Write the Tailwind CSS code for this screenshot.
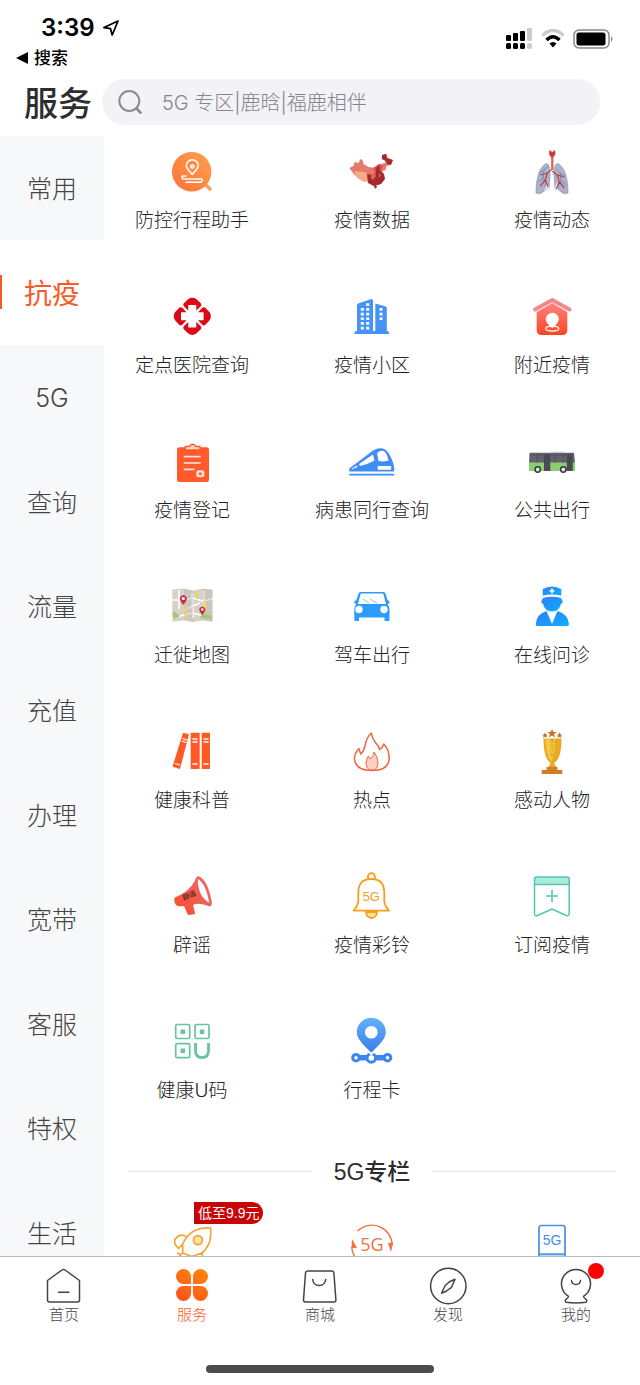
<!DOCTYPE html>
<html lang="zh-CN">
<head>
<meta charset="utf-8">
<meta name="viewport" content="width=device-width, initial-scale=1">
<title>服务</title>
<script src="https://cdn.jsdelivr.net/npm/@tailwindcss/browser@4"></script>
</head>
<body class="flex h-screen flex-col overflow-hidden bg-white font-['Inter','Noto_Sans_CJK_SC',sans-serif] text-[#333]">
<header class="shrink-0 pb-[11px]">
  <div class="flex items-start justify-between pt-4 pr-[26px] pl-4 text-black">
    <div>
      <div class="flex h-6 items-center gap-2 pl-[25px]">
        <span class="text-[24px] leading-6 font-semibold">3:39</span>
        <svg class="size-4" viewBox="0 0 16 16" fill="none" stroke="#000" stroke-width="1.8" stroke-linejoin="round"><path d="M15 1 1 7.5 7.5 8.7 9.2 15Z"/></svg>
      </div>
      <a href="#" class="flex h-[34px] items-center gap-1.5 pt-0.5 text-[17px] leading-6 font-medium"><svg class="size-3" viewBox="0 0 12 12"><path d="M0 6 12 0V12Z"/></svg>搜索</a>
    </div>
    <div class="flex items-center gap-2 pt-3">
      <svg width="27" height="21" viewBox="0 0 27 21"><g fill="#000"><rect y="7" width="5" height="6" rx="1"/><rect x="7" y="5" width="5" height="8" rx="1"/><rect x="14" y="3" width="5" height="10" rx="1"/><rect y="15" width="5" height="6" rx="1.5"/><rect x="7" y="15" width="5" height="6" rx="1.5"/><rect x="14" y="15" width="5" height="6" rx="1.5"/></g><g fill="#ccc"><rect x="21" y="0" width="5" height="13" rx="1"/><rect x="21" y="15" width="5" height="6" rx="2"/></g></svg>
      <svg width="24" height="20" viewBox="0 0 24 20" fill="none"><path d="M1.500 6.500Q12-3.500 22.500 6.500" stroke="#ccc" stroke-width="3.500"/><path d="M5.500 11Q12 4.500 18.500 11" stroke="#000" stroke-width="3.500"/><path d="M8.500 14.500Q12 11.500 15.500 14.500L12 18.500Z" fill="#000"/></svg>
      <svg width="41" height="20" viewBox="0 0 41 20"><rect x="1" y="1" width="35" height="18" rx="5" fill="#fff" stroke="#888" stroke-width="1.500"/><rect x="3.500" y="3.500" width="29" height="13" rx="2.500"/><path d="M38 7q3 3 0 6Z" fill="#888"/></svg>
    </div>
  </div>
  <div class="flex items-center gap-2.5 pt-[5px] pr-10 pl-6">
    <h1 class="shrink-0 pt-1 text-[34px] leading-[42px] font-medium text-[#2e2e2e]">服务</h1>
    <label class="flex h-[46px] flex-1 items-center gap-5 rounded-full bg-[#f2f2f7] pl-4">
      <svg class="size-6 shrink-0" viewBox="0 0 24 24" fill="none" stroke="#8b8b95" stroke-width="2"><circle cx="11.300" cy="11" r="10"/><path d="m18.500 18.500 4.800 5" stroke-width="2.600"/></svg>
      <input type="search" aria-label="搜索" placeholder="5G 专区|鹿晗|福鹿相伴" class="min-w-0 flex-1 bg-transparent pt-0.5 text-[20px] leading-6 font-light outline-none placeholder:text-[#85858e]">
    </label>
  </div>
</header>

<div class="flex min-h-0 flex-1">
  <nav aria-label="分类" class="w-[104px] shrink-0 overflow-y-auto bg-[#f7f8fa] [scrollbar-width:none]">
    <div class="grid h-[1149px] auto-rows-fr text-[25px] leading-9 font-light text-[#444] *:pt-0.5">
      <button>常用</button>
      <button class="relative bg-white text-[28px] font-normal text-[#fa5a28]"><span class="absolute top-[35px] left-0 h-[34px] w-0.5 bg-[#f55a2a]"></span>抗疫</button>
      <button>5G</button><button>查询</button><button>流量</button><button>充值</button><button>办理</button><button>宽带</button><button>客服</button><button>特权</button><button>生活</button>
    </div>
  </nav>
  <main class="min-w-0 flex-1 overflow-x-hidden overflow-y-auto [scrollbar-width:none]">
    <section aria-label="抗疫" class="-mx-0.5 grid auto-rows-[145px] grid-cols-3 text-[19px] leading-6 font-light text-[#222]">
      <a href="#" class="flex flex-col items-center gap-[13px] pt-3">
        <svg class="size-12" viewBox="0 0 48 48" fill="none"><defs><linearGradient id="o" x1="1" x2="0" y2="1"><stop stop-color="#ffa250"/><stop offset="1" stop-color="#ff7139"/></linearGradient></defs><path d="m37 36 6 6" stroke="#ff9b63" stroke-width="3.500"/><circle cx="23.700" cy="23.700" r="19.700" fill="url(#o)"/><g stroke="#fff" stroke-width="1.600" stroke-linejoin="round" stroke-linecap="round"><path d="M24.300 26.500C20.500 22.500 18.300 20 18.300 17.800a6 6 0 0 1 12 0c0 2.200-2.200 4.700-6 8.700Z"/><circle cx="24.300" cy="18.500" r="1.500"/><path d="M18 28H15q-2 1.500 0 3H33q2.500 1 0 3.200H18"/></g></svg>防控行程助手</a>
      <a href="#" class="flex flex-col items-center gap-[13px] pt-3">
        <svg class="size-12" viewBox="0 0 48 48"><path fill="#e8796e" d="m1.500 20 4-2 1-4 4 1 2-4 2 1 1 4 5 3 7 1 5-4 5-1-1-3-3-1 1-4 4-1 1 4 5 2-2 5-4 1-1 4-3 1 2 8-4 5-7 2-5-4-7-4-7-3Z"/><path fill="#f5ab83" d="m6 23 10 1 6 3-2 6-4 1-7-4Z"/><path fill="#d45346" d="m25 20 6-4 4 2-2 5 3 4-8-1Z"/><path fill="#a6292c" d="m34 7 4-1 1 4 6 2-2 5-4-1-1-3-4-2Zm-5 12 2-2 1 6 4 3 1 5-4 5-7 2-6-3-1-9 8 1Z"/><path fill="#dc6652" d="m23 27 4-2 1 3-3 4-2-2Zm8-2 2 2-2 3Z"/><path fill="#a6292c" d="m26 38 2-1 1 2-2 2Z"/></svg>疫情数据</a>
      <a href="#" class="flex flex-col items-center gap-[13px] pt-3">
        <svg class="size-12" viewBox="0 0 48 48" fill="none"><g fill="#aeb1ca" stroke="#8d91b4" stroke-width=".7"><path d="M18.500 15.500C12 18 8 29 8 45q5 2 8-2l5-3 1-14Q22 16 18.500 15.500Z"/><path d="M29.500 15.500C36 18 40 29 40 45q-5 2-8-2l-5-3-1-14Q26 16 29.500 15.500Z"/></g><path d="m19 34 3 7-6 3Zm10 0-3 7 6 3Z" fill="#d5e5f3"/><path d="M20 18l-4 4-5 3m5-3-1 8-5 4m5-4 3 5-1 4M28 21l4 4 5 3m-5-3 1 8 5 4m-5-4-3 5 1 4" stroke="#6882ae" stroke-width=".8"/><path d="M24.300 20v1l-5 4-2 7-5 6m7-13-7 2m5 5 3 7m4-16 5 4 2 7 5 6m-7-13 7 2m-5 5-3 7" stroke="#bd3c3b" stroke-width="1.200"/><path d="M24.300 7v15" stroke="#e06344" stroke-width="2.300"/><path d="m21.500 2 2.800 2L27 2l.5 4-1.800 3h-2.900L21 6Z" fill="#c83e3d"/></svg>疫情动态</a>
      <a href="#" class="flex flex-col items-center gap-[13px] pt-3">
        <svg class="size-12" viewBox="0 0 48 48" fill="#dc0717"><path id="petal" d="M20.300 6q4-2.600 8 0l4.700 4.500q1 1.500-.5 3L28.300 17.500V12h-8v5.500L16.100 13.500q-1.500-1.500-.5-3Z"/><use href="#petal" transform="rotate(90 24.300 23.300)"/><use href="#petal" transform="rotate(180 24.300 23.300)"/><use href="#petal" transform="rotate(270 24.300 23.300)"/></svg>定点医院查询</a>
      <a href="#" class="flex flex-col items-center gap-[13px] pt-3">
        <svg class="size-12" viewBox="0 0 48 48"><path fill="#4593f7" d="M9 12q0-1 1-1.500L23.500 6q1.500 0 1.500 1.500V38H27.300V10.500l10.500 3q1 .5 1 1.500V38q2.500 0 2.500 3H6.300q0-3 2.700-3Z"/><path stroke="#fff" stroke-width="3" stroke-dasharray="2.700 2" d="M14.300 15v22M19.700 10.300v27M33 15v12"/></svg>疫情小区</a>
      <a href="#" class="flex flex-col items-center gap-[13px] pt-3">
        <svg class="size-12" viewBox="0 0 48 48"><defs><linearGradient id="h" x2="0" y2="1"><stop stop-color="#ff8580"/><stop offset="1" stop-color="#fa4524"/></linearGradient></defs><path fill="url(#h)" d="m24.300 10 15 9v18q0 5-5 5h-20.600q-5 0-5-5V19Z"/><path d="M7 16.500 24.300 7 41.500 16.500" fill="none" stroke="#f8868c" stroke-width="4" stroke-linecap="round" stroke-linejoin="round"/><ellipse cx="24.300" cy="35.600" rx="6.500" ry="2.500" fill="none" stroke="#fff" stroke-width="1.300"/><path fill="#fff" d="M24.300 35.300c-3.500-3-6.500-6-6.500-9a6.500 6.500 0 0 1 13 0c0 3-3 6-6.500 9Z"/></svg>附近疫情</a>
      <a href="#" class="flex flex-col items-center gap-[13px] pt-3">
        <svg class="size-12" viewBox="0 0 48 48"><rect x="9" y="9.300" width="32" height="34.700" rx="2.500" fill="#ff5a2b"/><path d="M17.300 12V8.500h4.200a3.500 3.500 0 0 1 6.500 0h4V12Z" fill="#ffd5c7" stroke="#ff5a2b" stroke-width="1.400"/><path d="M15.700 18.700h17M15.700 25h17M15.700 31.300h11" stroke="#ffe6df" stroke-width="1.700"/><rect x="28.300" y="32.300" width="8" height="7" rx="2" fill="#ffdfd6"/><circle cx="32.300" cy="35.700" r="1.500" fill="#ff5a2b"/></svg>疫情登记</a>
      <a href="#" class="flex flex-col items-center gap-[13px] pt-3">
        <svg class="size-12" viewBox="0 0 48 48"><path fill="#408df4" d="M1.300 30.500 25 12.500q7-4 12-1 4 2 8 13 2 7 1 9H1.300Z"/><path stroke="#408df4" stroke-width="1.800" d="M1.300 36.700h45"/><g fill="#fff"><path d="m11 26 14-9.500 1.500 6q-7 4-14.500 5.500ZM29 15q5-4 8-1 2 2 3.500 8.500-5 1.500-10 .5Z"/><path d="M29.700 28h13.500v3.700H29.700ZM4 30.500l5-3 .5 1.500-6 2.500Z"/></g></svg>病患同行查询</a>
      <a href="#" class="flex flex-col items-center gap-[13px] pt-3">
        <svg class="size-12" viewBox="0 0 48 48"><path fill="#66616f" d="M1.500 14.700H46l1 10.300-.5 1H1Z"/><path fill="#8bd06f" d="M1 24.500h46V33H1Z"/><path fill="#4c4956" d="M16 16.500h6.300V33H16Zm22.700 0h6V33h-6Z"/><path stroke="#4f4b59" stroke-width=".8" d="M2 17h44M9 16v9m18-9v9m8-9v9"/><path fill="#c4c2cb" d="M23 13.700h14v1H23Z"/><g fill="#dedede" stroke="#393742" stroke-width="1.500"><circle cx="9.700" cy="31.500" r="2.700"/><circle cx="35.300" cy="31.500" r="2.700"/></g></svg>公共出行</a>
      <a href="#" class="flex flex-col items-center gap-[13px] pt-3">
        <svg class="size-12" viewBox="0 0 48 48"><path fill="#d8d1c8" d="m4.300 6.500 12-1 9 2 9-2 10.400 1V39l-10-1.500-9.400 1.500-9-1.500-12 1Z"/><path stroke="#fff" stroke-width="1.600" fill="none" d="M4 17h12l9-2 9 3 11-2M4 35l20-5 20 5M11 7v19M24 10l1 25M36 8v25M16 27l16-7"/><path fill="#b7b5b5" opacity=".4" d="m16 6 9 2v31l-9-2Zm19 0 9 1v31l-9-1Z"/><path stroke="#e9dc48" stroke-width="2" fill="none" d="M18 22v14M29 8v8M37 18v10"/><path fill="#a3c972" d="m5 28 6 4v2l-6 2Zm29 2 10 3v3l-12-1Z"/><g fill="#c82e3c"><path d="M15.300 22q-5-6-3-8 3-4 6 0 2 2-3 8ZM34.300 32q-4.500-5-2.500-7 2.500-3 5 0 2 2-2.500 7Z"/></g><g fill="#fff"><circle cx="15.300" cy="15.500" r="1.600"/><circle cx="34.300" cy="26.500" r="1.300"/></g></svg>迁徙地图</a>
      <a href="#" class="flex flex-col items-center gap-[13px] pt-3">
        <svg class="size-12" viewBox="0 0 48 48"><path fill="#2d9bfb" d="M12.500 9h23q1.500 0 2 1.500L39.500 17l1.500 1q1.500 2-.5 2.500l-1 .5q2 2 2 5v11q0 1-1 1h-4v-3.500H11V38H7q-.7 0-.7-1V26q0-3 2-5l-1-.5q-2-.5-.5-2.500l1.500-1L10.500 10.500q.5-1.500 2-1.500Z"/><path fill="#fff" d="M12.700 10.500h22.500L38 21H10Z"/><path stroke="#61b5fb" stroke-width=".8" d="m15 16 6 4m1-4 7 4"/><circle cx="11" cy="26.500" r="3.700" fill="#fff"/><circle cx="36" cy="26.500" r="3.700" fill="#fff"/></svg>驾车出行</a>
      <a href="#" class="flex flex-col items-center gap-[13px] pt-3">
        <svg class="size-12" viewBox="0 0 48 48"><defs><linearGradient id="d" x2="1" y2="1"><stop stop-color="#327cff"/><stop offset="1" stop-color="#0baffc"/></linearGradient></defs><g fill="url(#d)"><path d="M14.700 6Q24 1 33.300 6v6.500q-9.300-2-18.600 0Z"/><path d="M15 15q9-2.500 18 0l2 4q-1 1-2 2-2 7.500-9 7.500T15 21q-1-1-2-2Z"/><path d="m18.500 28 5.500 13 5.500-13Q40 31 41 41q0 2-2 2H9.500q-2 0-1.800-2Q8.500 31 18.500 28Z"/></g><path d="M24 5.500v5M21.500 8h5" stroke="#fff" stroke-width="1.600"/></svg>在线问诊</a>
      <a href="#" class="flex flex-col items-center gap-[13px] pt-3">
        <svg class="size-12" viewBox="0 0 48 48"><g fill="#ff5a24"><path d="m15 4.700 6 1.600-9 34.700-7.500-2.300Z"/><rect x="22.700" y="4.700" width="9" height="36.300" rx=".8"/><rect x="33.700" y="4.700" width="8.300" height="36.300" rx=".8"/></g><path d="m14.300 10.500 5 1.500m-5.700 1 5 1.500M7 35.500l5 1.500m12.500-26h5m-5 3h5m-5 22h5m6-25h5m-5 3h5m-5 22h5" stroke="#fff" stroke-width="1.300"/></svg>健康科普</a>
      <a href="#" class="flex flex-col items-center gap-[13px] pt-3">
        <svg class="size-12" viewBox="0 0 48 48" fill="none" stroke="#ea6845" stroke-width="1.500" stroke-linejoin="round"><path d="M23.300 5q.5 5 4.500 10 3 3 4 6.500 3-2 4-5.500 6 7 5.300 15.500Q40 42.500 24 42.500T6.500 31.500Q6 26 11 20.500q.5 3 2 5.500Q16 23 17 18q1-8 6.300-13Z"/><path d="M26 24q4 5 4 11 0 7-6 7t-6-7q0-4 2.500-7 .5 2 1.500 3Q26 28 26 24Z" fill="#fbd1c1" stroke-width="1"/></svg>热点</a>
      <a href="#" class="flex flex-col items-center gap-[13px] pt-3">
        <svg class="size-12" viewBox="0 0 48 48"><path fill="#e8aa24" d="M15.500 10.500h18Q33.500 31 26 35l3 5H20l2.500-5Q15.500 30 15.500 10.500Z"/><path fill="#f6c83f" d="M17.500 11H27q0 18-4 22-5-5-5.500-22Z"/><path fill="#d27c26" d="M18.500 39h11v3h4.800V46H13.700v-4h4.800Z"/><path fill="#c96c25" d="m24 1 1.300 3H29l-3 2 1.300 3.500L24 7.500l-3.300 2L22 6l-3-2h3.700Zm-7 3.500 1 2h2l-1.700 1.300.7 2.200-2-1.300-2 1.300.7-2.200L14 6.500h2Zm14.500 0 1 2h2l-1.700 1.300.7 2.200-2-1.300-2 1.300.7-2.200-1.700-1.300h2Z"/><text x="24" y="15" fill="#b77b16" font-size="4" text-anchor="middle">感<tspan x="24" y="19.500">动</tspan><tspan x="24" y="24">人</tspan><tspan x="24" y="28.500">物</tspan></text></svg>感动人物</a>
      <a href="#" class="flex flex-col items-center gap-[13px] pt-3">
        <svg class="size-12" viewBox="0 0 48 48"><defs><linearGradient id="m" x1="1" x2="0" y2="1"><stop stop-color="#e97075"/><stop offset="1" stop-color="#fb4a28"/></linearGradient></defs><path fill="url(#m)" d="M7 24.500q14-5.500 20-17 1.500-5 4.500-4 8 4 12 24 1 5-1.500 6-8-3.500-15-2.500l-2 1 2 8q0 1-1 1.200l-5 .8q-1 0-1.500-1l-3.500-8-4 .3Q8 33.500 6.500 29 5.500 26 7 24.500Z"/><path fill="#fff" d="M30 6q8 5 11.300 24-8-5-10-13-2-6-1.300-11Z"/><text x="21" y="25" fill="#712c27" font-size="7" font-weight="700" text-anchor="middle" transform="rotate(-22 21 22)">辟谣</text></svg>辟谣</a>
      <a href="#" class="flex flex-col items-center gap-[13px] pt-3">
        <svg class="size-12 overflow-visible" viewBox="0 0 48 48" fill="none" stroke="#f5a01b" stroke-width="1.800" stroke-linejoin="round"><path d="M20 6V3.500a3.400 3.400 0 0 1 6.800 0V6"/><path d="M23.300 6q13 0 13 14V29q1 5 4.700 8.700H5.600Q9.300 34 10.300 29V20q0-14 13-14Z"/><path d="M18 39a5.500 6 0 0 0 11 0Z" fill="#ffe1a3"/><text x="23.300" y="28" fill="#f5a01b" stroke="none" font-family="Liberation Sans,sans-serif" font-size="13" font-weight="400" text-anchor="middle">5G</text></svg>疫情彩铃</a>
      <a href="#" class="flex flex-col items-center gap-[13px] pt-3">
        <svg class="size-12" viewBox="0 0 48 48" fill="none" stroke="#56c7ae" stroke-width="1.500" stroke-linejoin="round"><path fill="#acebdc" stroke="none" d="M7 4h34v7.500H7Z"/><path d="M8.500 4h30.700q2 0 2 2v34.500q0 3-3 2L24 36 9.500 42.500q-3 1-3-2V6q0-2 2-2Zm-2 7.500h34.700M24 17v12M18 23h12"/></svg>订阅疫情</a>
      <a href="#" class="flex flex-col items-center gap-[13px] pt-3">
        <svg class="size-12" viewBox="0 0 48 48" fill="none" stroke="#66c5a0" stroke-width="1.700"><rect x="7.700" y="6.500" width="14" height="14" rx="1.500"/><rect x="27" y="6.500" width="14" height="14" rx="1.500"/><rect x="7.700" y="25.700" width="14" height="14" rx="1.500"/><path fill="#66c5a0" stroke="none" d="M12.500 11.500h4.500V16h-4.500Zm19.300 0h4.500V16h-4.500Zm-19.300 19H17V35h-4.500Z"/><path d="M27.500 25v8q0 6.500 6.500 6.500t6.500-6.500v-8" stroke-width="2.800"/></svg>健康U码</a>
      <a href="#" class="flex flex-col items-center gap-[13px] pt-3">
        <svg class="size-12" viewBox="0 0 48 48"><defs><linearGradient id="p" x2="0" y2="1"><stop stop-color="#63b1fa"/><stop offset="1" stop-color="#397ee8"/></linearGradient></defs><path stroke="#3d85ef" stroke-width="5.500" d="M8 39.700h32"/><g fill="#fff" stroke="#3d85ef" stroke-width="3"><circle cx="8" cy="39.700" r="3.300"/><circle cx="39.500" cy="39.700" r="3.300"/><circle cx="23.300" cy="40" r="4.300"/></g><path fill="#fff" d="m17 30 6.300 8 6.300-8Z"/><path fill="url(#p)" fill-rule="evenodd" d="M23.300 34.700C14 26 8.800 20 8.800 14.300a14.500 14.500 0 0 1 29 0c0 5.700-5.200 11.700-14.500 20.400ZM23.300 8a6.300 6.300 0 1 0 0 12.600 6.300 6.300 0 0 0 0-12.600Z"/></svg>行程卡</a>
    </section>

    <section aria-labelledby="five">
      <div class="flex h-10 items-center gap-[22px] px-6">
        <span class="h-px flex-1 bg-[#e4e4e4]"></span>
        <h2 id="five" class="pt-0.5 font-['Liberation_Sans','Noto_Sans_CJK_SC',sans-serif] text-[23px] leading-8 font-medium text-[#2c2c2c]">5G专栏</h2>
        <span class="h-px flex-1 bg-[#e4e4e4]"></span>
      </div>
      <div class="-mx-0.5 grid grid-cols-3 pt-[31px] pb-4">
        <a href="#" aria-label="5G 低至9.9元" class="relative flex justify-center">
          <svg class="size-12" viewBox="0 0 48 48" fill="none" stroke="#f3a536" stroke-width="1.700" stroke-linejoin="round"><path d="M14.700 22Q19 12 28 8q6-2.500 14.700-2 .5 7-1 13.400Q39.500 26 34 31l1.500 8M18.500 14.500Q13 11.500 9 15t-1.500 8l3 3.500 4.200-4.500M14.700 22v9l9 3.500 10.300-3.500M9 37l5.700-6M9 31l4 1.500M14 37h10"/><circle cx="29.900" cy="18.100" r="4.500" fill="#ffe2a3"/></svg>
          <span class="absolute -top-5 left-[92px] rounded-tl-xl rounded-r-full bg-[#c90406] px-1 font-['Liberation_Sans','Noto_Sans_CJK_SC',sans-serif] text-[14px] leading-[22px] text-white">低至9.9元</span>
        </a>
        <a href="#" aria-label="5G" class="flex justify-center"><svg class="size-12" viewBox="0 0 48 48" fill="none" stroke="#ed7440" stroke-width="1.400"><path d="M9.500 9A20.500 20.500 0 0 1 44.300 23M3.700 25A20.500 20.500 0 0 0 9.500 38"/><path fill="#ed7440" stroke="none" d="m4 17 5 9H3.500Zm36 4h5l-2 9Z"/><text x="24" y="29" fill="#ed7440" stroke="none" font-family="Open Sans,sans-serif" font-size="18" text-anchor="middle">5G</text></svg></a>
        <a href="#" aria-label="5G 手机" class="flex justify-center"><svg class="size-12" viewBox="0 0 48 48" fill="none" stroke="#4a8ee8" stroke-width="1.700"><rect x="11" y="3.500" width="26" height="41" rx="2.500"/><path fill="#b3d5fa" d="M11 32h26v4H11Z"/><text x="24" y="23" fill="#4a8ee8" stroke="none" font-family="Liberation Sans,sans-serif" font-size="14" text-anchor="middle">5G</text></svg></a>
      </div>
    </section>
  </main>
</div>

<footer class="shrink-0 border-t border-[#b8b8b8] bg-white pb-3">
  <nav aria-label="主导航" class="grid grid-cols-5 pt-[9px] text-center text-[15px] leading-[18px] font-light text-[#444]">
    <a href="#" class="flex flex-col items-center"><svg class="size-10" viewBox="0 0 40 40" fill="none" stroke="#444" stroke-width="1.500" stroke-linecap="round" stroke-linejoin="round"><path d="M3.500 14.500 18 4q1.500-1 3 0l14.500 10.500V34q0 2-2 2h-28q-2 0-2-2ZM14.500 26.300h10.500"/></svg>首页</a>
    <a href="#" aria-current="page" class="flex flex-col items-center text-[#fa5a28]"><svg class="size-10" viewBox="0 0 40 40"><defs><linearGradient id="s" gradientUnits="userSpaceOnUse" x1="30" y1="3" x2="10" y2="35"><stop stop-color="#ff850b"/><stop offset="1" stop-color="#ff531b"/></linearGradient></defs><path fill="url(#s)" d="M11.500 3A7.500 7.500 0 0 1 19 10.500V18H11.500a7.500 7.500 0 0 1 0-15Zm17 0a7.500 7.500 0 0 1 0 15H21V10.500A7.500 7.500 0 0 1 28.500 3Zm-17 17H19v7.500A7.500 7.500 0 1 1 11.500 20ZM21 20h7.500a7.500 7.500 0 1 1-7.500 7.500Z"/></svg>服务</a>
    <a href="#" class="flex flex-col items-center"><svg class="size-10" viewBox="0 0 40 40" fill="none" stroke="#444" stroke-width="1.500" stroke-linecap="round"><path d="M8 5h24q1.700 0 1.900 2l2 27q0 2-2 2H5.500q-2 0-2-2l2-27Q5.800 5 8 5ZM12.700 13.500q.8 6 6.500 6t6.500-6"/></svg>商城</a>
    <a href="#" class="flex flex-col items-center"><svg class="size-10" viewBox="0 0 40 40" fill="none" stroke="#444" stroke-width="1.500" stroke-linejoin="round"><circle cx="20.300" cy="20" r="17.700"/><path d="m27 13.300-3.500 8-5 3.700-5 2.300 3.500-7.500 4.500-4Z"/></svg>发现</a>
    <a href="#" class="relative flex flex-col items-center"><svg class="size-10" viewBox="0 0 40 40" fill="none" stroke="#444" stroke-width="1.500" stroke-linecap="round" stroke-linejoin="round"><path d="M12.500 30.300a14.500 14.500 0 1 1 15 0q0 1.500 2.500 3 1.500 1.500 0 3-10 1.500-20 0-1.500-1.500 0-3 2.500-1.500 2.500-3ZM15.500 14.500q.5 4 4.500 4t4.500-4"/></svg><span class="absolute -top-[3px] left-[76px] size-4 rounded-full bg-[#f90505]"></span>我的</a>
  </nav>
  <div class="mx-auto mt-[41px] h-2 w-[228px] rounded-full bg-[#4b4b4b]"></div>
</footer>
</body>
</html>
